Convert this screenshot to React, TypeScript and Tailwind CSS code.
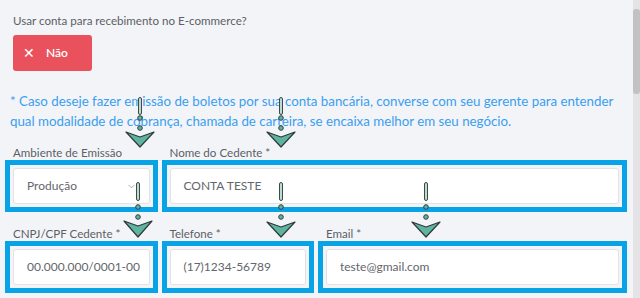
import { ChevronDown } from "lucide-react";

interface ArrowProps {
  left: number;
  top: number;
  pill: number;
  c1: number;
  c2: number;
  head: number;
  headH: number;
}

// tutorial annotation: pill + two dots + teal arrowhead pointing down
function Arrow({ left, top, pill, c1, c2, head, headH }: ArrowProps) {
  const h = head + headH + 2;
  return (
    <svg
      className="pointer-events-none absolute"
      style={{ left, top }}
      width={32}
      height={h}
      viewBox={`0 0 32 ${h}`}
    >
      <rect x={14.5} y={0.5} width={3} height={pill} rx={1.5} fill="#b9ddd3" stroke="#3f4a48" strokeWidth={1} />
      <circle cx={16} cy={c1} r={2.3} fill="#5fb3a1" stroke="#34403e" strokeWidth={1} />
      <circle cx={16} cy={c2} r={2.3} fill="#5fb3a1" stroke="#34403e" strokeWidth={1} />
      <polygon
        points={`2,${head + 1} 16,${head + 6} 30,${head + 1} 16,${head + headH}`}
        fill="#5fb3a1"
        stroke="#2f3a38"
        strokeWidth={1.2}
        strokeLinejoin="round"
      />
    </svg>
  );
}

function Field({
  label,
  value,
  span,
  select
}: {
  label: string;
  value: string;
  span: string;
  select?: boolean;
}) {
  return (
    <div className={span}>
      <p className="mb-[8px] whitespace-nowrap text-[11.6px] leading-[14px] text-[#5b5f66]">{label}</p>
      <div className="relative">
        <div className="flex h-[36px] items-center justify-between rounded-[3px] border border-[#e2e3e8] bg-white pl-[13px] pr-[12px] text-[12px] text-[#63666c]">
          <span className="whitespace-nowrap">{value}</span>
          {select ? <ChevronDown size={11} strokeWidth={1.6} className="text-[#8a8d93]" /> : null}
        </div>
        {/* blue highlight box drawn over the screenshot */}
        <span className="pointer-events-none absolute -inset-[8px] border-[5px] border-[#08a3e6]" />
      </div>
    </div>
  );
}

export default function App() {
  return (
    <div
      className="relative flex h-[298px] w-[640px] overflow-hidden bg-[#f3f4f8]"
      style={{ fontFamily: "Lato, 'Noto Sans', sans-serif" }}
    >
      <div className="flex-1 pl-[13px] pr-[14px] pt-[14px]">
        <p className="text-[11.6px] leading-[14px] text-[#5b5f66]">Usar conta para recebimento no E-commerce?</p>
        <button className="mt-[7px] flex h-[36px] w-[79px] items-center gap-[11px] rounded-[3px] bg-[#e9515c] pl-[10px] text-[12px] font-semibold text-white">
          <span className="text-[14px] font-normal leading-none">✕</span>
          <span>Não</span>
        </button>
        <p className="-ml-[3px] mt-[20px] text-[13.3px] leading-[20px] text-[#3a9ef0]">
          * Caso deseje fazer emissão de boletos por sua conta bancária, converse com seu gerente para entender
          qual modalidade de cobrança, chamada de carteira, se encaixa melhor em seu negócio.
        </p>
        <div className="mt-[15px] grid grid-cols-12 gap-x-5 gap-y-[23px]">
          <Field label="Ambiente de Emissão" value="Produção" span="col-span-3" select />
          <Field label="Nome do Cedente *" value="CONTA TESTE" span="col-span-9" />
          <Field label="CNPJ/CPF Cedente *" value="00.000.000/0001-00" span="col-span-3" />
          <Field label="Telefone *" value="(17)1234-56789" span="col-span-3" />
          <Field label="Email *" value="teste@gmail.com" span="col-span-6" />
        </div>
      </div>
      <div className="w-[7px] bg-[#e4e4e6] pt-[9px]">
        <div className="h-[85px] w-full rounded-[3px] bg-[#c2c2c4]" />
      </div>

      <Arrow left={124} top={97} pill={17} c1={21} c2={31} head={34} headH={16} />
      <Arrow left={265} top={97} pill={17} c1={21} c2={31} head={34} headH={16} />
      <Arrow left={122} top={182} pill={18} c1={25} c2={35} head={38} headH={17} />
      <Arrow left={265} top={182} pill={18} c1={25} c2={35} head={39} headH={16} />
      <Arrow left={410} top={182} pill={18} c1={25} c2={35} head={39} headH={16} />
    </div>
  );
}
